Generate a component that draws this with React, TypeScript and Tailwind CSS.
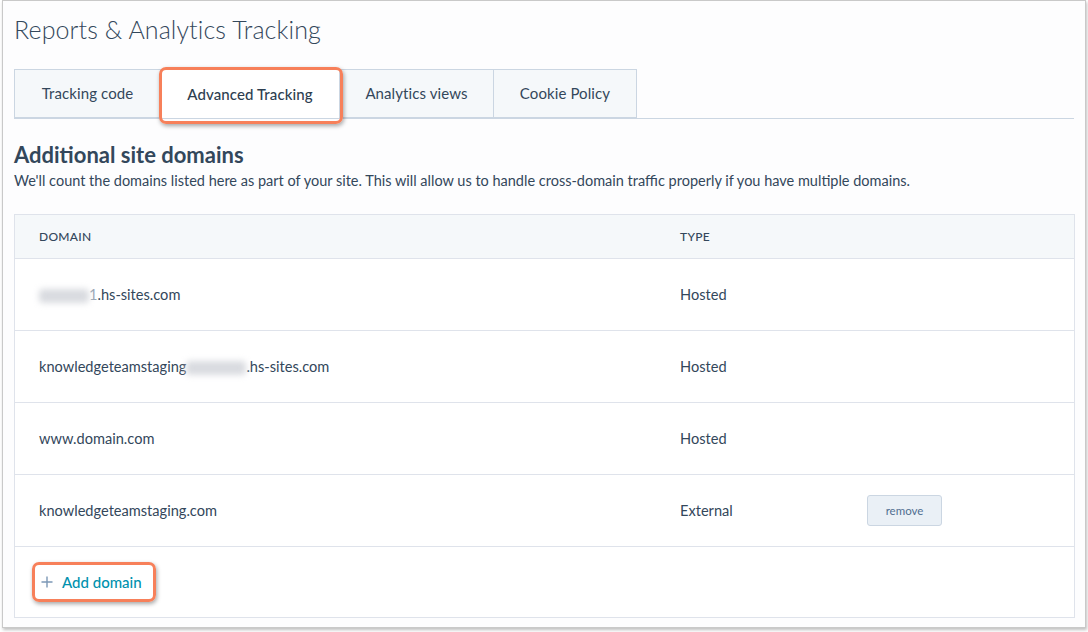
import React from "react";

const font = { fontFamily: "Lato, 'Open Sans', 'Liberation Sans', sans-serif" };

function Tab({ label, width, active }: { label: string; width: string; active?: boolean }) {
  return (
    <div
      className={
        "flex h-full items-center justify-center border-l border-t border-[#cbd6e2] text-[15px] tracking-[0.1px] " +
        width +
        (active ? " bg-white text-[#2d3e50] font-medium -mb-px h-[50px] relative" : " bg-[#f5f8fa] border-b text-[#33475b]")
      }
    >
      {label}
      {active && (
        <div className="pointer-events-none absolute -left-[2px] -right-[4px] -top-[3px] -bottom-[6px] rounded-[7px] border-[3px] border-[#f7805a] shadow-[1px_2px_4px_rgba(0,0,0,0.35)]" />
      )}
    </div>
  );
}

function Redacted({ width }: { width: string }) {
  return <span className={"inline-block h-[14px] rounded-sm bg-[#d9dbe0] blur-[3px] align-middle " + width} />;
}

function Row({ domain, type, action }: { domain: React.ReactNode; type: string; action?: boolean }) {
  return (
    <div className="flex h-[72px] items-center border-t border-[#dfe3eb] text-[14.6px] text-[#33475b]">
      <div className="w-[665px] pl-[24px]">{domain}</div>
      <div className="w-[187px]">{type}</div>
      {action && (
        <button className="h-[31px] w-[75px] rounded-[3px] border border-[#cbd6e2] bg-[#eaf0f6] text-[11.5px] text-[#506e91]">
          remove
        </button>
      )}
    </div>
  );
}

export default function App() {
  return (
    <div className="h-[632px] w-[1088px] bg-white" style={font}>
      <div className="ml-[2px] h-[628px] w-[1084px] border-l border-r border-b border-t border-[#c9c9c9] bg-[#fdfdfe] shadow-[1px_2px_3px_rgba(0,0,0,0.25)]">
        <div className="pl-[11px] pr-[11px]">
          <h1 className="pt-[13px] text-[25px] font-light leading-[30px] tracking-[0.1px] text-[#33475b]">
            Reports &amp; Analytics Tracking
          </h1>

          <div className="mt-[25px] flex h-[50px] items-end border-b border-[#cbd6e2]">
            <div className="flex h-[49px] items-stretch border-r border-[#cbd6e2]">
              <Tab label="Tracking code" width="w-[146px]" />
              <Tab label="Advanced Tracking" width="w-[179px]" active />
              <Tab label="Analytics views" width="w-[154px]" />
              <Tab label="Cookie Policy" width="w-[143px]" />
            </div>
          </div>

          <h2 className="mt-[23px] text-[22px] font-bold leading-[26px] text-[#33475b]">Additional site domains</h2>
          <p className="mt-[3px] text-[14.5px] leading-[20px] text-[#33475b]">
            We'll count the domains listed here as part of your site. This will allow us to handle cross-domain traffic
            properly if you have multiple domains.
          </p>

          <div className="mt-[23px] w-[1061px] border border-[#dfe3eb] bg-white">
            <div className="flex h-[43px] items-center bg-[#f5f8fa] text-[12px] font-medium tracking-[0.3px] text-[#33475b]">
              <div className="w-[665px] pl-[24px]">DOMAIN</div>
              <div>TYPE</div>
            </div>
            <Row
              domain={
                <span>
                  <Redacted width="w-[50px]" />
                  <span className="text-[#9aa6b4]">1</span>.hs-sites.com
                </span>
              }
              type="Hosted"
            />
            <Row
              domain={
                <span>
                  knowledgeteamstaging
                  <Redacted width="w-[60px]" />
                  .hs-sites.com
                </span>
              }
              type="Hosted"
            />
            <Row domain="www.domain.com" type="Hosted" />
            <Row domain="knowledgeteamstaging.com" type="External" action />
            <div className="flex h-[71px] items-center border-t border-[#dfe3eb] pl-[17px]">
              <div className="relative flex h-[40px] w-[124px] items-center gap-[9px] rounded-[7px] border-[3px] border-[#f7805a] pl-[6px] shadow-[1px_2px_4px_rgba(0,0,0,0.35)]">
                <svg width="12" height="12" viewBox="0 0 12 12" className="text-[#7c98b6]">
                  <path d="M6 0.5v11M0.5 6h11" stroke="currentColor" strokeWidth="1.4" />
                </svg>
                <span className="text-[15px] font-medium text-[#0091ae]">Add domain</span>
              </div>
            </div>
          </div>
        </div>
      </div>
    </div>
  );
}
